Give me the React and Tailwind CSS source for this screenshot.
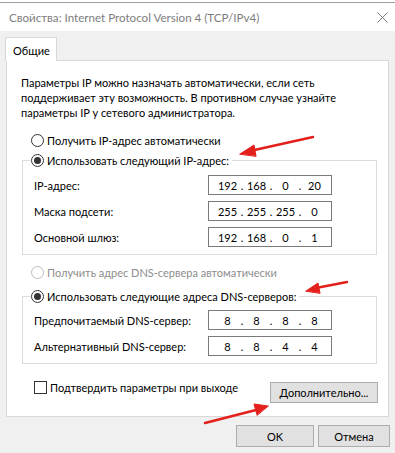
const font = { fontFamily: 'Lato, "Noto Sans", "Liberation Sans", sans-serif' };

function Radio({ checked, disabled, label }) {
  return (
    <span className="flex items-center h-[15px] whitespace-nowrap">
      <span
        className={`w-[13px] h-[13px] rounded-full border flex items-center justify-center bg-white ${
          disabled ? 'border-[#bcbcbc]' : 'border-[#333]'
        }`}
      >
        {checked && <span className="w-[7px] h-[7px] rounded-full bg-[#333]" />}
      </span>
      <span className={`ml-[3px] ${disabled ? 'text-[#8d8d8d]' : 'text-black'}`}>{label}</span>
    </span>
  );
}

function IpBox({ parts }) {
  return (
    <div className="w-[124px] h-[20px] border border-[#7a7a7a] bg-white flex items-center pl-[7px]">
      {parts.map((p, i) => (
        <div key={i} className="flex items-center">
          <span className="w-[23px] text-center">{p}</span>
          {i < 3 && <span className="w-[6px] text-center">.</span>}
        </div>
      ))}
    </div>
  );
}

function Row({ label, parts }) {
  return (
    <div className="flex items-center justify-between pl-[11px] pr-[44px] whitespace-nowrap">
      <span>{label}</span>
      <IpBox parts={parts} />
    </div>
  );
}

function Group({ legend, children, gapTop }) {
  return (
    <fieldset className="border border-[#dcdcdc] ml-[15px] mr-[11px] pb-[7px]">
      <legend className="ml-[8px] pr-[3px]">{legend}</legend>
      <div className={`flex flex-col gap-[6px] ${gapTop}`}>{children}</div>
    </fieldset>
  );
}

function Button({ children, className = '' }) {
  return (
    <button className={`bg-[#e1e1e1] border border-[#adadad] text-black ${className}`}>
      {children}
    </button>
  );
}

export default function App() {
  return (
    <div className="relative w-[395px] h-[453px] bg-[#f0f0f0] overflow-hidden text-[11px] leading-[15px] text-black" style={font}>
      {/* strip of the window behind */}
      <div className="h-[3px] bg-white border-b border-[#a0a0a0]" />

      {/* title bar */}
      <div className="h-[28px] bg-white flex items-center justify-between pl-[9px] pr-[7px]">
        <span className="text-[#7d7d7d] text-[11.6px] whitespace-nowrap">Свойства: Internet Protocol Version 4 (TCP/IPv4)</span>
        <svg width="11" height="11" viewBox="0 0 11 11">
          <path d="M0.5 0.5 L10.5 10.5 M10.5 0.5 L0.5 10.5" stroke="#7a7a7a" strokeWidth="1" />
        </svg>
      </div>

      {/* tab header */}
      <div className="pl-[5px] pt-[6px]">
        <div className="w-[52px] h-[24px] bg-white border border-b-0 border-[#d9d9d9] pl-[7px] pt-[5px] relative z-10 -mb-px">
          Общие
        </div>
      </div>

      {/* tab panel */}
      <div className="ml-[6px] w-[383px] h-[357px] bg-white border border-[#d9d9d9] flex flex-col">
        <p className="pl-[14px] pt-[14px] whitespace-nowrap">
          Параметры IP можно назначать автоматически, если сеть
          <br />
          поддерживает эту возможность. В противном случае узнайте
          <br />
          параметры IP у сетевого администратора.
        </p>

        <div className="pl-[24px] mt-[13px]">
          <Radio label="Получить IP-адрес автоматически" />
        </div>
        <div className="mt-[5px]">
          <Group gapTop="mt-[7px]" legend={<Radio checked label="Использовать следующий IP-адрес:" />}>
            <Row label="IP-адрес:" parts={['192', '168', '0', '20']} />
            <Row label="Маска подсети:" parts={['255', '255', '255', '0']} />
            <Row label="Основной шлюз:" parts={['192', '168', '0', '1']} />
          </Group>
        </div>

        <div className="pl-[24px] mt-[10px]">
          <Radio disabled label="Получить адрес DNS-сервера автоматически" />
        </div>
        <div className="mt-[9px]">
          <Group gapTop="mt-[6px]" legend={<Radio checked label="Использовать следующие адреса DNS-серверов:" />}>
            <Row label="Предпочитаемый DNS-сервер:" parts={['8', '8', '8', '8']} />
            <Row label="Альтернативный DNS-сервер:" parts={['8', '8', '4', '4']} />
          </Group>
        </div>

        <div className="flex items-center justify-between pl-[27px] pr-[10px] mt-[18px]">
          <label className="flex items-center -mt-[10px] whitespace-nowrap">
            <span className="w-[13px] h-[13px] border border-[#333] bg-white" />
            <span className="ml-[3px]">Подтвердить параметры при выходе</span>
          </label>
          <Button className="w-[108px] h-[21px] whitespace-nowrap">Дополнительно...</Button>
        </div>
      </div>

      {/* dialog buttons */}
      <div className="flex justify-end gap-[4px] pr-[5px] mt-[8px]">
        <Button className="w-[78px] h-[22px]">OK</Button>
        <Button className="w-[72px] h-[22px]">Отмена</Button>
      </div>

      {/* red annotation arrows */}
      <svg className="absolute inset-0 pointer-events-none" width="395" height="453">
        <g fill="#e3201b" stroke="#e3201b" strokeLinecap="round">
          <line x1="313" y1="137" x2="250" y2="151" strokeWidth="2.5" />
          <polygon points="240,154 254,145 256,156" />
          <line x1="347" y1="282" x2="316" y2="288" strokeWidth="2.5" />
          <polygon points="306,291 318,283 320,293" />
          <line x1="205" y1="423" x2="256" y2="410" strokeWidth="2.5" />
          <polygon points="268,406 254,404 257,415" />
        </g>
      </svg>
    </div>
  );
}
